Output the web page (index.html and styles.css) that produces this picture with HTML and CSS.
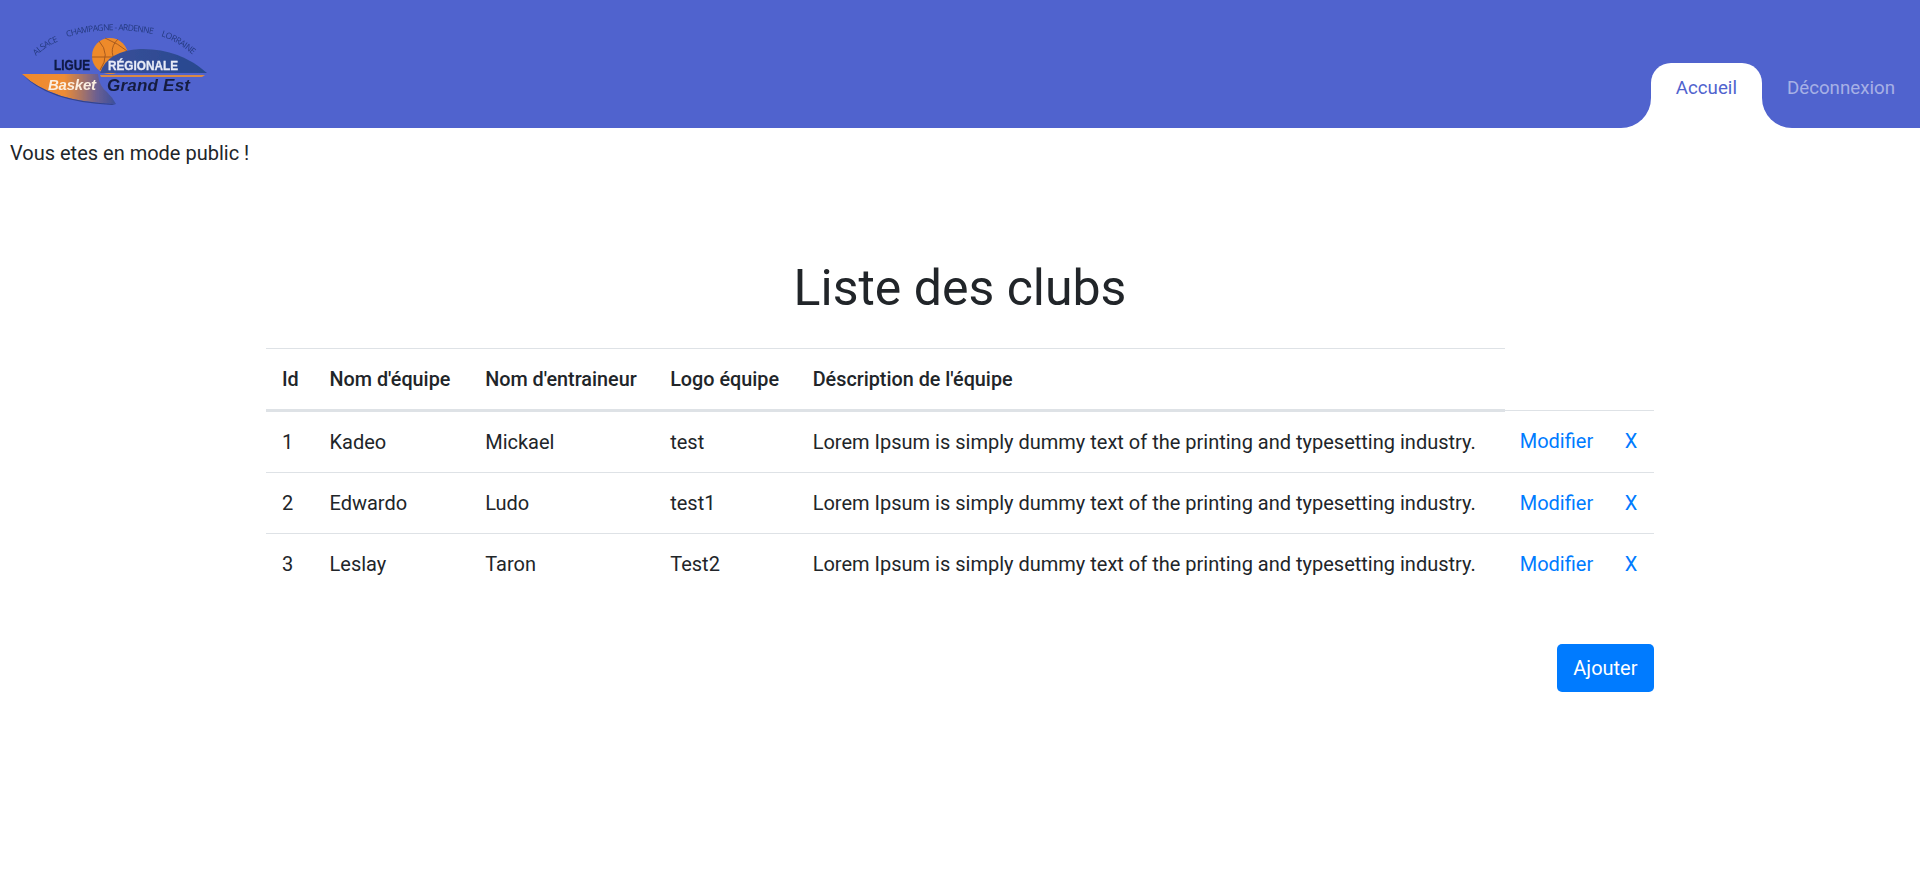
FILE: index.html
```html
<!DOCTYPE html>
<html lang="fr">
<head>
<meta charset="utf-8">
<title>Liste des clubs</title>
<link rel="stylesheet" href="styles.css">
</head>
<body>
<header class="topbar">
  <svg class="logo" width="200" height="90" viewBox="0 0 200 90" aria-label="Ligue Régionale Basket Grand Est">
    <defs>
      <linearGradient id="left" x1="0" x2="1" y1="0" y2="0">
        <stop offset="0" stop-color="#f18a2a"/><stop offset="0.45" stop-color="#ee8c35"/><stop offset="0.8" stop-color="#6a5f92"/><stop offset="1" stop-color="#3a4f9c"/>
      </linearGradient>
      <linearGradient id="right" x1="0" x2="1" y1="0" y2="0">
        <stop offset="0" stop-color="#3a5099"/><stop offset="1" stop-color="#27488f"/>
      </linearGradient>
      <path id="arc1" d="M21 36 Q 30 27 44 21"/>
      <path id="arc2" d="M52 17 Q 92 5 137 14"/>
      <path id="arc3" d="M146 16 Q 164 22 178 35"/>
      <filter id="soft"><feGaussianBlur stdDeviation="0.55"/></filter>
    </defs>
    <g filter="url(#soft)">
      <g class="logo-arc">
        <text><textPath href="#arc1" textLength="27">ALSACE</textPath></text>
        <text><textPath href="#arc2" textLength="87">CHAMPAGNE - ARDENNE</textPath></text>
        <text><textPath href="#arc3" textLength="37">LORRAINE</textPath></text>
      </g>
      <circle cx="95" cy="36" r="18" fill="#ee8a2c"/>
      <path d="M84 21 Q 96 34 85 50 M103 19 Q 90 32 106 48 M77 37 H113 M90 18 Q 104 24 112 31" fill="none" stroke="#a85a1d" stroke-width="1"/>
      <path d="M85 53 Q 92 31 125 29 Q 164 28 192 53 Z" fill="url(#right)"/>
      <path d="M85 55 H190 L187 57 H86 Z" fill="#d98a45"/>
      <path d="M7 54 H83 Q 84 66 92 72 Q 98 78 101 84 Q 36 82 7 54 Z" fill="url(#left)"/>
      <path d="M7 54 Q 36 82 101 84 L 97 85 Q 32 82 7 54 Z" fill="#33438c"/>
      <text class="logo-ligue" x="39" y="50" textLength="36" lengthAdjust="spacingAndGlyphs">LIGUE</text>
      <text class="logo-region" x="93" y="50" textLength="70" lengthAdjust="spacingAndGlyphs">RÉGIONALE</text>
      <text class="logo-basket" x="33" y="69.5" textLength="48">Basket</text>
      <text class="logo-grand" x="92" y="70.5" textLength="83">Grand Est</text>
    </g>
  </svg>
  <nav class="tabs">
    <a class="tab tab-active" href="#">Accueil</a>
    <a class="tab" href="#">Déconnexion</a>
  </nav>
</header>
<p class="mode">Vous etes en mode public !</p>
<main class="content">
  <h1 class="title">Liste des clubs</h1>
  <table class="clubs">
    <colgroup>
      <col class="col-id"><col class="col-team"><col class="col-coach"><col class="col-logo"><col class="col-desc"><col class="col-edit"><col class="col-del">
    </colgroup>
    <thead>
      <tr><th>Id</th><th>Nom d'équipe</th><th>Nom d'entraineur</th><th>Logo équipe</th><th>Déscription de l'équipe</th></tr>
    </thead>
    <tbody>
      <tr><td>1</td><td>Kadeo</td><td>Mickael</td><td>test</td><td>Lorem Ipsum is simply dummy text of the printing and typesetting industry.</td><td class="act"><a class="link" href="#">Modifier</a></td><td class="act"><a class="link" href="#">X</a></td></tr>
      <tr><td>2</td><td>Edwardo</td><td>Ludo</td><td>test1</td><td>Lorem Ipsum is simply dummy text of the printing and typesetting industry.</td><td class="act"><a class="link" href="#">Modifier</a></td><td class="act"><a class="link" href="#">X</a></td></tr>
      <tr><td>3</td><td>Leslay</td><td>Taron</td><td>Test2</td><td>Lorem Ipsum is simply dummy text of the printing and typesetting industry.</td><td class="act"><a class="link" href="#">Modifier</a></td><td class="act"><a class="link" href="#">X</a></td></tr>
    </tbody>
  </table>
  <div class="actions"><a class="add" href="#">Ajouter</a></div>
</main>
</body>
</html>
```
FILE: styles.css
```css
* { box-sizing: border-box; }
body { margin: 0; font-family: Roboto, "Liberation Sans", sans-serif; font-size: 20px; line-height: 1.5; color: #212529; background: #fff; }
.topbar { height: 128px; background: #5063ce; display: flex; justify-content: space-between; align-items: flex-end; }
.logo { align-self: flex-start; margin: 20px 0 0 15px; }
.logo-arc { font-family: "Open Sans", sans-serif; font-size: 8.5px; fill: #24397f; }
.logo-ligue { font: 700 14px "Liberation Sans", sans-serif; fill: #0f1a45; stroke: #0f1a45; stroke-width: .4px; }
.logo-region { font: 700 13px "Liberation Sans", sans-serif; fill: #e8ebf7; stroke: #e8ebf7; stroke-width: .3px; }
.logo-basket { font: italic 700 15px "Liberation Sans", sans-serif; fill: #fbeee0; }
.logo-grand { font: italic 700 17px "Liberation Sans", sans-serif; fill: #141c40; }
.tabs { display: flex; overflow: hidden; padding-left: 32px; margin-left: -32px; }
.tab { position: relative; display: block; height: 65px; padding: 11px 25px; font-size: 18.72px; line-height: 28px; color: rgba(255,255,255,.5); text-decoration: none; }
.tab-active { background: #fff; color: #5063ce; border-radius: 20px 20px 0 0; }
.tab-active::before, .tab-active::after { content: ""; position: absolute; bottom: 0; width: 30px; height: 30px; }
.tab-active::before { right: 100%; border-bottom-right-radius: 30px; box-shadow: 10px 10px 0 10px #fff; }
.tab-active::after { left: 100%; border-bottom-left-radius: 30px; box-shadow: -10px 10px 0 10px #fff; }
.mode { margin: 0; padding: 10px 10px 0; }
.content { width: 1388px; margin: 0 auto; padding-top: 90px; }
.title { margin: 0 0 30px; font-size: 50px; font-weight: 400; line-height: 60px; text-align: center; }
.clubs { width: 100%; border-collapse: collapse; table-layout: fixed; }
.col-id { width: 47.5px; }
.col-team { width: 155.7px; }
.col-coach { width: 185px; }
.col-logo { width: 142.5px; }
.col-desc { width: 708.5px; }
.col-edit { width: 105px; }
.col-del { width: 44px; }
.clubs th { padding: 16px 16px 14px; text-align: left; font-size: 19.8px; font-weight: 500; border-top: 1px solid #dee2e6; border-bottom: 3px solid #dee2e6; white-space: nowrap; }
.clubs td { padding: 15px 16px; border-top: 1px solid #dee2e6; white-space: nowrap; }
.clubs td.act { padding-left: 14.5px; padding-right: 0; }
.link { color: #007bff; text-decoration: none; }
.actions { display: flex; justify-content: flex-end; margin-top: 50px; }
.add { background: #007bff; color: #fff; text-decoration: none; border-radius: 5px; padding: 9px 16.5px; font-size: 20px; line-height: 30px; }
```
